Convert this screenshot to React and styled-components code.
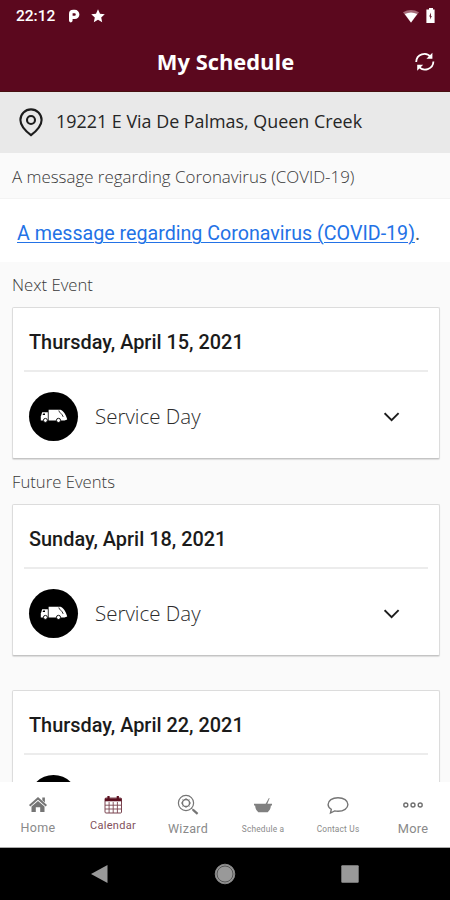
import React from 'react';
import styled, { createGlobalStyle } from 'styled-components';

const GlobalStyle = createGlobalStyle`
  * {
    box-sizing: border-box;
  }

  body {
    background-color: #fafafa;
    font-family: 'Open Sans', sans-serif;
    margin: 0;
  }
`;

const Screen = styled.div`
  display: flex;
  flex-direction: column;
  height: 900px;
  overflow: hidden;
  width: 450px;
`;

const Header = styled.header`
  background-color: #5b081e;
  border-bottom: 1px solid #481010;
  color: #fff;
  flex: none;
  height: 92px;
`;

const StatusBar = styled.div`
  align-items: center;
  display: flex;
  height: 32px;
  padding: 0 14px 0 16px;

  svg {
    display: block;
  }
`;

const Clock = styled.span`
  font-family: Roboto, sans-serif;
  font-size: 15.5px;
  font-weight: 500;
  margin-right: 13px;
`;

const StatusIcons = styled.div`
  align-items: center;
  display: flex;
  gap: ${props => props.$gap}px;
  margin-left: ${props => (props.$right ? 'auto' : '0')};
`;

const TitleBar = styled.div`
  align-items: center;
  display: grid;
  grid-template-columns: 60px 1fr 60px;
  height: 59px;
`;

const PageTitle = styled.h1`
  font-size: 21.9px;
  font-weight: 700;
  grid-column: 2;
  line-height: 30px;
  margin: 0;
  padding: 1px 0 0 1px;
  text-align: center;
`;

const RefreshButton = styled.button`
  background: none;
  border: 0;
  color: #fff;
  height: 20px;
  justify-self: end;
  margin-right: 15px;
  padding: 0;
  width: 20px;

  svg {
    display: block;
  }
`;

const Address = styled.div`
  align-items: center;
  background-color: #e9e9e9;
  color: #262626;
  display: flex;
  flex: none;
  font-size: 17.9px;
  gap: 12px;
  height: 61px;
  padding: 0 0 4px 19px;

  svg {
    margin-top: 4px;
  }
`;

const Label = styled.h2`
  color: #383838;
  flex: none;
  font-size: ${props => props.$size || 16.7}px;
  font-weight: 350;
  height: 45px;
  line-height: ${props => props.$line || 46}px;
  margin: 0;
  padding-left: 12px;
`;

const Notice = styled.p`
  background-color: #fff;
  border-top: 1px solid #f3f3f3;
  color: #555;
  flex: none;
  font-family: Roboto, sans-serif;
  font-size: 19.65px;
  height: 64px;
  line-height: 70px;
  margin: 0;
  padding-left: 17px;
`;

const NoticeLink = styled.a`
  color: #2372e6;
  text-decoration: underline;
  text-decoration-thickness: 1px;
  text-underline-offset: 2px;
`;

const Content = styled.main`
  display: flex;
  flex: 1;
  flex-direction: column;
  min-height: 0;
  overflow: hidden;
`;

const Card = styled.section`
  background-color: #fff;
  border: 1px solid #dcdcdc;
  border-bottom-color: #c4c4c4;
  border-radius: 2px;
  box-shadow: 0 1px 1px rgba(0, 0, 0, 0.12);
  flex: none;
  height: 152px;
  margin: 0 10px ${props => props.$gap || 0}px 12px;
  padding: 0 11px;
`;

const CardDate = styled.h3`
  border-bottom: 2px solid #ececec;
  color: #1b1b1b;
  font-family: Roboto, sans-serif;
  font-size: 19.9px;
  font-weight: 500;
  height: 64px;
  line-height: 69px;
  margin: 0;
  padding-left: 5px;
`;

const CardEvent = styled.div`
  align-items: center;
  color: #2c2c2c;
  display: flex;
  font-size: 20.5px;
  font-weight: 350;
  height: 86px;
  padding: 2px 28px 0 5px;

  > svg {
    margin: 2px 0 0 auto;
  }
`;

const Badge = styled.div`
  align-items: center;
  background-color: #000;
  border-radius: 50%;
  display: flex;
  height: 49px;
  justify-content: center;
  margin-right: 17px;
  width: 49px;
`;

const TabBar = styled.nav`
  background-color: #fff;
  border-bottom: 1px solid #aaa;
  display: grid;
  flex: none;
  grid-template-columns: repeat(6, 75px);
  height: 66px;
`;

const Tab = styled.div`
  align-items: center;
  color: ${props => (props.$active ? '#82505b' : '#8a8a8a')};
  display: flex;
  flex-direction: column;
  font-family: Roboto, sans-serif;
  font-size: ${props => props.$size}px;
  padding: 12px 0 0 1px;
  white-space: nowrap;

  svg {
    display: block;
    height: 22px;
    width: 24px;
  }
`;

const TabText = styled.span`
  letter-spacing: ${props => props.$spacing}px;
  line-height: 16px;
  margin-top: ${props => props.$top}px;
`;

const SystemBar = styled.div`
  align-items: center;
  background-color: #000;
  display: flex;
  flex: none;
  height: 52px;
  justify-content: space-between;
  padding: 0 90px 0 90px;
`;

const ParkingIcon = () => (
  <svg width="12" height="14" viewBox="0 0 12 14" fill="#fff">
    <path
      fillRule="evenodd"
      d="M1 5Q1 .8 5.2.8h1.6a4.6 4.6 0 0 1 0 9.2H4.6v1.6a1.8 1.8 0 0 1-3.6 0zM4.6 4.3v2.4h2a1.2 1.2 0 0 0 0-2.4z"
    />
  </svg>
);

const StarIcon = () => (
  <svg width="14" height="14" viewBox="0 0 14 14" fill="#fff">
    <path d="M7 .3l2 4.4 4.8.5-3.6 3.2 1 4.8L7 10.7l-4.2 2.5 1-4.8L.2 5.2 5 4.7z" />
  </svg>
);

const WifiIcon = () => (
  <svg width="16" height="13" viewBox="0 0 16 13">
    <path d="M0 2.2Q8-2 16 2.2L8 12.8z" fill="#a66b79" />
    <path d="M1.8 4Q8 .8 14.2 4L8 12.6z" fill="#fff" />
  </svg>
);

const BatteryIcon = () => (
  <svg width="10" height="16" viewBox="0 0 10 16">
    <path d="M3 0h4v1.6h1.6V15H.4V1.6H3z" fill="#fff" />
    <path d="M4.9 4.5L3.2 8.5h1v3L5.8 8h-.9z" fill="#5b081e" />
  </svg>
);

const RefreshIcon = () => (
  <svg width="20" height="20" viewBox="0 0 20 20" fill="none" stroke="#fff" strokeWidth="1.8">
    <path d="M1.2 10A8.2 8.2 0 0 1 15.8 5.1M18.4 9.6A8.2 8.2 0 0 1 3.8 14.5" />
    <path d="M17.4.8v6H11.4zM2.2 18.8v-6H8.2z" fill="#fff" stroke="none" />
  </svg>
);

const PinIcon = () => (
  <svg width="25" height="29" viewBox="0 0 25 29" fill="none" stroke="#1d1d1d" strokeWidth="2.1">
    <path d="M12 27.2C8.5 24.5 1.4 18.6 1.4 12a10.6 10.6 0 0 1 21.2 0c0 6.6-7.1 12.5-10.6 15.2z" />
    <circle cx="12" cy="12" r="4" />
  </svg>
);

const ChevronIcon = () => (
  <svg width="16" height="10" viewBox="0 0 16 10" fill="none" stroke="#1d1d1d" strokeWidth="1.9">
    <path d="M.6 1.2l7 7 7-7" />
  </svg>
);

const TruckIcon = () => (
  <svg width="28" height="14" viewBox="0 0 28 14">
    <path d="M8.6.8h12c2.6.7 5.3 5 6.6 9.6l-2.7 1.2H8.6z" fill="#fff" />
    <path d="M2.2 3.2h5.6v8.4H.8V7.4z" fill="#fff" />
    <path d="M3.2 4.4h1.8v1.6H2.6z" fill="#000" />
    <path d="M18.8 1.5c.4 2.4 3.4 3 4.4 6.4" fill="none" stroke="#000" strokeWidth=".8" />
    <circle cx="5.4" cy="11.4" r="2" fill="#fff" stroke="#000" strokeWidth=".9" />
    <circle cx="18.5" cy="11.4" r="2.1" fill="#fff" stroke="#000" strokeWidth=".9" />
  </svg>
);

const HomeIcon = () => (
  <svg viewBox="0 0 24 22" fill="#757575">
    <path d="M12 3l9 8-1.3 1.4L12 5.7l-7.7 6.7L3 11z" />
    <path d="M16.3 3.4h2.6v5l-2.6-2.2zM12 7l6.5 5.6V18h-4.3v-4.8H9.8V18H5.5v-5.4z" />
  </svg>
);

const CalendarIcon = () => (
  <svg viewBox="0 0 24 22" fill="none" stroke="#7a4550">
    <rect x="4" y="4" width="16.5" height="15" rx="1" />
    <path d="M4 5.8h16.5" stroke="#5b1020" strokeWidth="3" />
    <path d="M7.5 2v4M16.8 2v4" stroke="#5b1020" strokeWidth="2.2" />
    <path d="M4 11.2h16.5M4 15h16.5M8.1 8v11M12.2 8v11M16.4 8v11" strokeWidth=".9" />
  </svg>
);

const WizardIcon = () => (
  <svg viewBox="0 0 24 22" fill="none" stroke="#757575">
    <circle cx="10" cy="9" r="7.6" strokeWidth="1.2" />
    <circle cx="10" cy="9" r="3.6" strokeWidth="1.5" />
    <path d="M10 4.2v1.4M10 12.4v1.4M5.2 9h1.3M13.5 9h1.3M6.6 5.6l.9.9M12.5 11.5l.9.9M6.6 12.4l.9-.9M12.5 6.5l.9-.9" />
    <path d="M15.2 14.1l2 1.7" strokeWidth="1" />
    <path d="M16.8 15.6l4.8 4.2" strokeWidth="2.2" />
  </svg>
);

const BowlIcon = () => (
  <svg viewBox="0 0 24 22" fill="#808080">
    <path d="M3 9.8h18v1.8h-1.1c-.3 3.2-1.2 5-3.2 6.6H7.3c-2-1.6-2.9-3.4-3.2-6.6H3z" />
    <path d="M14.6 9.9l3.3-6 .7.4-2.3 5.6z" />
  </svg>
);

const ChatIcon = () => (
  <svg viewBox="0 0 24 22" fill="none" stroke="#757575" strokeWidth="1.4">
    <path d="M12 3.7c5.8 0 9.9 3 9.9 6.8S17.8 17.3 12 17.3c-1.2 0-2.3-.1-3.4-.4L4.5 19l.8-3.6c-2-1.2-3.2-2.9-3.2-4.9 0-3.8 4.1-6.8 9.9-6.8z" />
  </svg>
);

const MoreIcon = () => (
  <svg viewBox="0 0 24 22" fill="none" stroke="#707070" strokeWidth="1.4">
    <circle cx="4.8" cy="11" r="2" />
    <circle cx="12" cy="11" r="2" />
    <circle cx="19.2" cy="11" r="2" />
  </svg>
);

const EventCard = ({ date, event, gap }) => (
  <Card $gap={gap}>
    <CardDate>{date}</CardDate>
    <CardEvent>
      <Badge>
        <TruckIcon />
      </Badge>
      {event}
      <ChevronIcon />
    </CardEvent>
  </Card>
);

const tabs = [
  { text: 'Home', Icon: HomeIcon, size: 12.5, top: 4 },
  { text: 'Calendar', Icon: CalendarIcon, size: 11, top: 2, active: true },
  { text: 'Wizard', Icon: WizardIcon, size: 12.5, top: 5 },
  { text: 'Schedule a', Icon: BowlIcon, size: 8.3, top: 5 },
  { text: 'Contact Us', Icon: ChatIcon, size: 8.3, top: 5 },
  { text: 'More', Icon: MoreIcon, size: 12.8, top: 5 },
];

export default () => (
  <Screen>
    <GlobalStyle />
    <Header>
      <StatusBar>
        <Clock>22:12</Clock>
        <StatusIcons $gap={11}>
          <ParkingIcon />
          <StarIcon />
        </StatusIcons>
        <StatusIcons $gap={7} $right>
          <WifiIcon />
          <BatteryIcon />
        </StatusIcons>
      </StatusBar>
      <TitleBar>
        <PageTitle>My Schedule</PageTitle>
        <RefreshButton aria-label="Refresh">
          <RefreshIcon />
        </RefreshButton>
      </TitleBar>
    </Header>
    <Content>
      <Address>
        <PinIcon />
        19221 E Via De Palmas, Queen Creek
      </Address>
      <Label $size={16.9} $line={48}>A message regarding Coronavirus (COVID-19)</Label>
      <Notice>
        <NoticeLink>A message regarding Coronavirus (COVID-19)</NoticeLink>.
      </Notice>
      <Label>Next Event</Label>
      <EventCard date="Thursday, April 15, 2021" event="Service Day" />
      <Label>Future Events</Label>
      <EventCard date="Sunday, April 18, 2021" event="Service Day" gap={34} />
      <EventCard date="Thursday, April 22, 2021" />
    </Content>
    <TabBar>
      {tabs.map(({ text, Icon, size, top, active }) => (
        <Tab key={text} $size={size} $active={active}>
          <Icon />
          <TabText $top={top} $spacing={size > 10 ? 0.3 : 0.2}>{text}</TabText>
        </Tab>
      ))}
    </TabBar>
    <SystemBar>
      <svg width="18" height="20" viewBox="0 0 18 20" fill="#999">
        <path d="M1 10L17.5 1v18z" />
      </svg>
      <svg width="24" height="22" viewBox="0 0 24 22">
        <circle cx="13" cy="11" r="9.8" fill="#999" stroke="#888" />
        <circle cx="13" cy="11" r="8" fill="none" stroke="#555" />
      </svg>
      <svg width="20" height="20" viewBox="0 0 20 20">
        <rect x="1.3" y="1.3" width="17.4" height="17.4" rx="1" fill="#999" />
      </svg>
    </SystemBar>
  </Screen>
);
